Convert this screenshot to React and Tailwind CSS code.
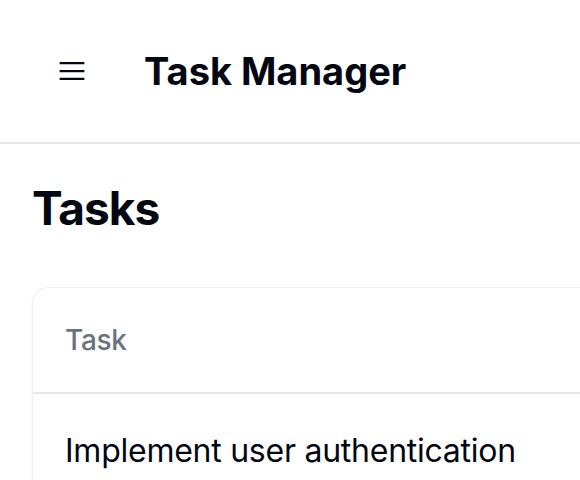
export default function App() {
  return (
    <div className="h-screen w-full overflow-hidden bg-white font-['Inter',sans-serif] text-[#030712]">
      <header className="flex h-[144px] items-center border-b-2 border-[#e5e7eb] pl-[54px]">
        <button className="flex h-[36px] w-[36px] items-center justify-center text-[#030712]">
          <svg
            xmlns="http://www.w3.org/2000/svg"
            fill="none"
            viewBox="0 0 24 24"
            strokeWidth={1.5}
            stroke="currentColor"
            className="h-[36px] w-[36px]"
          >
            <path strokeLinecap="butt" strokeLinejoin="round" d="M3.75 6.75h16.5M3.75 12h16.5m-16.5 5.25h16.5" />
          </svg>
        </button>
        <h1 className="ml-[54px] text-[38px] font-bold leading-[46px]">Task Manager</h1>
      </header>
      <main className="px-[32px]">
        <h2 className="mt-[36px] text-[46px] font-bold leading-[56px] tracking-[-1px]">Tasks</h2>
        <div className="mt-[51px] w-[760px] rounded-[16px] border border-[#f0f0f2] bg-white shadow-[0_1px_3px_rgba(0,0,0,0.06)]">
          <div className="border-b-2 border-[#e5e7eb] px-[32px] py-[32px] text-[28px] font-medium leading-[40px] tracking-[-0.3px] text-[#6b7280]">
            Task
          </div>
          <div className="px-[32px] pt-[33px] pb-[33px] text-[32px] leading-[48px] tracking-[-0.25px] text-[#030712]">
            Implement user authentication
          </div>
        </div>
      </main>
    </div>
  );
}
